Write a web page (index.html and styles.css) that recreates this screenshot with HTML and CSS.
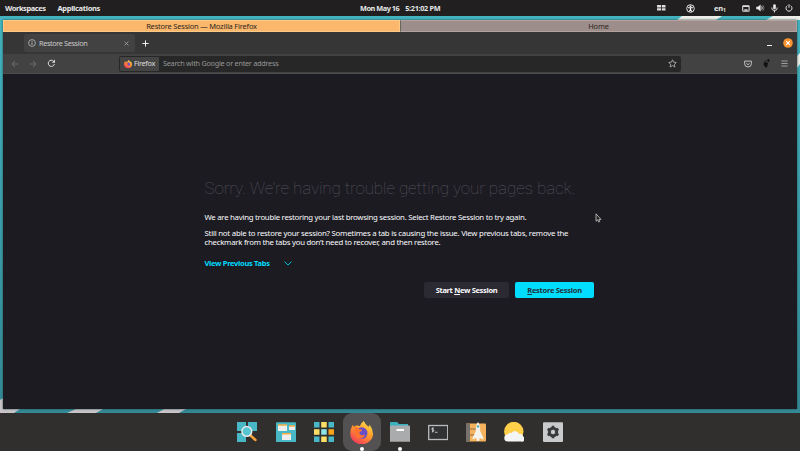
FILE: index.html
```
<!DOCTYPE html>
<html lang="en">
<head>
<meta charset="utf-8">
<title>Restore Session</title>
<link rel="stylesheet" href="styles.css">
</head>
<body>
<header class="panel">
  <span class="t-ws">Workspaces</span><div><span class="t-app">Applications</span></div>
  <div class="clock"><span class="t-date">Mon May 16</span><span class="t-time">5:21:02 PM</span></div>
  <div class="tray">
    <svg class="i-tile" width="9" height="6" viewBox="0 0 9 6"><path fill="#ddd" d="M0 0h4v2.5H0zM0 3.3h4v2.2H0zM4.8 0H8.5v2.5H4.8zM4.8 3.3h3.7v2.2H4.8z"/></svg>
    <svg class="i-acc" width="9" height="9" viewBox="0 0 9 9"><circle cx="4.5" cy="4.5" r="3.8" fill="none" stroke="#e5e5e5"/><circle cx="4.5" cy="2.3" r=".9" fill="#fff"/><path d="M2 3.8h5M4.5 3.5v2L3.3 7.6M4.5 5.5l1.2 2.1" stroke="#fff" stroke-width="1.1" fill="none"/></svg>
    <span class="t-en">en<sub>1</sub></span>
    <svg class="i-net" width="8" height="7" viewBox="0 0 8 7"><rect x=".7" y=".7" width="6.4" height="5.5" rx=".7" fill="none" stroke="#ddd" stroke-width="1.1"/><path d="M1 1.4h6M2.3 5h3.3" stroke="#ddd" stroke-width="1.3"/></svg>
    <svg class="i-vol" width="9" height="8" viewBox="0 0 9 8"><path fill="#eee" d="M.3 2.7H2L4.6.6v6.8L2 5.3H.3z"/><path d="M5.6 2.4q1.3 1.6 0 3.2" stroke="#ddd" fill="none"/><path d="M6.8 1q2.3 3 0 6" stroke="#777" fill="none"/></svg>
    <svg class="i-mic" width="7" height="9" viewBox="0 0 7 9"><rect x="2.2" y=".3" width="2.6" height="5" rx="1.3" fill="#eee"/><path d="M.8 3.5v.6q0 2.4 2.7 2.4t2.7-2.4v-.6M3.5 6.5v2" fill="none" stroke="#ddd"/></svg>
    <svg class="i-pow" width="8" height="8" viewBox="0 0 8 8"><path d="M2.3 1.7a3 3 0 1 0 3.4 0M4 .3v3.4" fill="none" stroke="#e5e5e5"/></svg>
  </div>
</header>
<main class="desktop">
  <svg class="wallpaper" width="800" height="397" viewBox="0 0 800 397"><path fill="#eeeee8" d="M682 0h40l-6 4h-39zM773 0h27v4h-34zM797 40l3-3v11l-3 4z"/><path fill="#c9c4c8" d="M0 384l3-2v11h17l-6 4H0zM76 393h27l-7 4H67zM164 393h22l-7 4h-22z"/></svg>
  <section class="window">
    <div class="stack"><div class="stack-tab active"><span class="t-stack">Restore Session — Mozilla Firefox</span></div><div class="stack-tab"><span class="t-home">Home</span></div></div>
    <div class="tabs">
      <div class="tab">
        <svg width="8" height="8" viewBox="0 0 8 8"><circle cx="4" cy="4" r="3.4" fill="none" stroke="#bbb" stroke-width=".8"/><path d="M4 3.5v2.4M4 1.9v.9" stroke="#ccc" stroke-width=".9"/></svg>
        <span class="t-tab">Restore Session</span>
        <svg class="close" width="5" height="5" viewBox="0 0 5 5"><path d="M.6.6l3.8 3.8M4.4.6L.6 4.4" stroke="#aaa" stroke-width=".8"/></svg>
      </div>
      <svg class="plus" width="7" height="7" viewBox="0 0 7 7"><path d="M3.5.4v6.2M.4 3.5h6.2" stroke="#eee"/></svg>
      <i class="minimize"></i>
      <svg class="win-close" width="10" height="10" viewBox="0 0 10 10"><circle cx="5" cy="5" r="4.8" fill="#f79330"/><path d="M3.2 3.2l3.6 3.6M6.8 3.2L3.2 6.8" stroke="#fff" stroke-width="1.1"/></svg>
    </div>
    <div class="toolbar">
      <svg class="nav" width="8" height="8" viewBox="0 0 8 8"><path d="M7.5 4H1M4 1L1 4l3 3" fill="none" stroke="#777" stroke-width=".8"/></svg>
      <svg class="nav fwd" width="8" height="8" viewBox="0 0 8 8"><path d="M.5 4H7M4 1l3 3-3 3" fill="none" stroke="#777" stroke-width=".8"/></svg>
      <svg class="nav reload" width="9" height="9" viewBox="0 0 9 9"><path d="M7.4 5A3.1 3.1 0 1 1 6.6 2.2" fill="none" stroke="#ddd"/><path d="M8 .6v3.2H4.8z" fill="#ddd"/></svg>
      <div class="url">
        <div class="identity"><svg width="8" height="8" viewBox="0 0 20 20"><use href="#fox"/></svg><span class="t-fx">Firefox</span></div>
        <span class="t-search">Search with Google or enter address</span>
        <svg class="star" width="9" height="9" viewBox="0 0 9 9"><path d="M4.5.8l1.1 2.4 2.7.3-2 1.8.6 2.7-2.4-1.4L2.1 8l.6-2.7-2-1.8 2.7-.3z" fill="none" stroke="#bbb" stroke-width=".8"/></svg>
      </div>
      <svg class="pocket" width="8" height="8" viewBox="0 0 8 8"><path d="M.6 1.1h6.8v2.5a3.4 3.4 0 0 1-6.8 0zM2.3 3.2L4 4.8l1.7-1.6" fill="none" stroke="#ccc" stroke-width=".9"/></svg>
      <svg class="foot" width="7" height="9" viewBox="0 0 7 9"><path d="M1 3.7Q3 2.3 4.5 3.8T3.8 6q1.4.5.3 2T1.3 7Q0 4.8 1 3.7z" fill="#121212"/><ellipse cx="5.4" cy="1.6" rx="1.1" ry="1.5" fill="#121212"/><path d="M1 2.7h.8M2.6 1.7h.8" stroke="#121212"/></svg>
      <svg class="menu" width="7" height="7" viewBox="0 0 7 7"><path d="M.4 1h6.2M.4 3.5h6.2M.4 6h6.2" stroke="#aaa" stroke-width=".9"/></svg>
    </div>
    <article class="page">
      <h1><span class="t-h">Sorry. We’re having trouble getting your pages back.</span></h1>
      <p class="intro"><span class="t-l1">We are having trouble restoring your last browsing session. Select Restore Session to try again.</span></p>
      <p class="detail"><span class="t-l2">Still not able to restore your session? Sometimes a tab is causing the issue. View previous tabs, remove the</span><br><span class="t-l3">checkmark from the tabs you don’t need to recover, and then restore.</span></p>
      <div class="previous"><span class="t-prev">View Previous Tabs</span><svg width="8" height="5" viewBox="0 0 8 5"><path d="M.5.6L4 4.1 7.5.6" fill="none" stroke="#00ddff" stroke-width=".9"/></svg></div>
      <div class="buttons"><button><span class="t-new">Start <u>N</u>ew Session</span></button><button class="primary"><span class="t-res"><u>R</u>estore Session</span></button></div>
    </article>
  </section>
  <svg class="cursor" width="7" height="10" viewBox="0 0 7 10"><path d="M1 .8v7.4l1.6-1.4 1.1 2.3 1.1-.6-1-2.1H6z" fill="#222" stroke="#ccc" stroke-width=".8"/></svg>
</main>
<footer class="dock">
  <div class="app"><svg viewBox="0 0 20 20"><path fill="#49b8c6" d="M0 0h9v9H0zM11 0h9v9h-9zM0 11h9v9H0z"/><path d="M13 13l5.5 5" stroke="#f9a33a" stroke-width="2.4" stroke-linecap="round"/><circle cx="9.8" cy="9.4" r="4.9" fill="#56c5d2" stroke="#e8e8e8" stroke-width="1.5"/></svg></div>
  <div class="app"><svg viewBox="0 0 20 20"><rect width="20" height="20" y=".3" rx="1" fill="#49b8c6"/><path fill="#eee" d="M2 3h9v6H2zM13 4h6v4h-6zM6 12h9v6H6z"/><path stroke="#f5ae42" stroke-width="1.4" d="M2 3h9M13 4h6M6 11.7h9"/></svg></div>
  <div class="app"><svg viewBox="0 0 20 20"><path fill="#49b8c6" d="M0 0h5.5v5.5H0zM14.5 0H20v5.5h-5.5zM0 14.5h5.5V20H0zM14.5 14.5H20V20h-5.5z"/><path fill="#ffe066" d="M7.2 0h5.5v5.5H7.2zM0 7.2h5.5v5.5H0zM7.2 14.5h5.5V20H7.2z"/><path fill="#faa41a" d="M14.5 7.2H20v5.5h-5.5z"/><path fill="#8ee5e8" d="M7.2 7.2h5.5v5.5H7.2z"/></svg></div>
  <div class="app focused"><svg class="fx" viewBox="0 0 20 20"><defs><linearGradient id="flame" x1=".8" y1="0" x2=".2" y2="1"><stop offset="0" stop-color="#ffe14d"/><stop offset=".45" stop-color="#ff9a2c"/><stop offset="1" stop-color="#f5315e"/></linearGradient></defs><g id="fox"><path fill="url(#flame)" d="M12 0q1 2.5 4 5 1-.5 1-2 3 4 3 8.3A9.5 8.8 0 0 1 .3 11Q0 7 2.4 3.2L3.3 5l1.5-.8Q7 3.7 8.5 4.6 9.5 1.5 12 0z"/><circle cx="10.2" cy="10.5" r="5" fill="#6750c7"/><path d="M4 5.2q3-.2 4.3 2l2.4.5q-.4 1.5-2.4 1.9-.4 2.6 2.2 2.8 1.5-.1 2.5-.8-.6 3.2-4.1 3.7Q5 15.3 4.6 11 3.8 8 4 5.2z" fill="#ff722f"/></g></svg><i class="dot"></i></div>
  <div class="app"><svg viewBox="0 0 20 20"><path fill="#3ab2c2" d="M0 1.2Q0 0 1 0h6l2 2h9v4H0z"/><rect y="3.5" width="20" height="16.5" rx="1" fill="#a9abad"/><rect x="6.5" y="7" width="7.5" height="2" rx=".5" fill="#fff"/><path d="M0 19.5h20" stroke="#888"/></svg><i class="dot"></i></div>
  <div class="app"><svg viewBox="0 0 20 20"><rect x=".7" y="3.5" width="19" height="14" fill="#303234" stroke="#b9bbbd" stroke-width="1.3"/><path d="M5.8 6.3Q3.6 5.8 3.7 7t2 1.2-1.8 1.5M4.8 5.5v5M7 10.3h2.5" fill="none" stroke="#ddd" stroke-width=".8"/></svg></div>
  <div class="app"><svg viewBox="0 0 20 20"><rect y="1.5" width="20" height="18" rx="1" fill="#f4b35c"/><path d="M0 1.5h4v18H0z" fill="#78716b"/><path d="M4 7h6M4 13l6 0" stroke="#8d6a52"/><path fill="#f6f3ec" d="M12 0q2.4 3 2.2 9l3.2 7v1.6l-3.6-1.6-.8 3h-2l-.8-3-3.6 1.6V16l3.2-7Q9.6 3 12 0z"/><circle cx="12" cy="4.5" r="1.2" fill="#4ca8b5"/></svg></div>
  <div class="app"><svg viewBox="0 0 20 20"><circle cx="9.8" cy="9.5" r="9.7" fill="#ffcf4a"/><path d="M4 19.5a3.5 3.5 0 0 1-.4-7 3.3 3.3 0 0 1 4-1.5 4.2 4.2 0 0 1 7.5 1 3 3 0 0 1 4 2.5 2.7 2.7 0 0 1-2 5z" fill="#f4f5f6"/></svg></div>
  <div class="app"><svg viewBox="0 0 20 20"><rect y=".3" width="20" height="19.7" rx="1" fill="#c9cacb"/><circle cx="10" cy="10" r="3.7" fill="none" stroke="#393b3c" stroke-width="3"/><path d="M10 3.8v2M10 14.2v2M4.6 6.9l1.7 1M13.7 12.1l1.7 1M4.6 13.1l1.7-1M13.7 7.9l1.7-1" stroke="#393b3c" stroke-width="2.6"/></svg></div>
</footer>
</body>
</html>
```
FILE: styles.css
```
* { box-sizing: border-box; }
body { margin: 0; width: 800px; height: 451px; overflow: hidden; display: flex; flex-direction: column; background: #312f2e; font: 7.5px/9px "Noto Sans", sans-serif; color: #fbfbfe; }
span { white-space: nowrap; }
svg, i { display: block; flex: none; }
.panel { height: 16px; display: grid; grid-template-columns: 52.5px 302.5px 1fr auto; align-items: center; padding: 0 7px 0 5px; background: #211f20; font-weight: 700; color: #e8e8e8; }
.t-ws { letter-spacing: -.42px; }
.t-app { letter-spacing: -.32px; }
.clock { display: flex; gap: 6px; font-size: 7.3px; }
.t-date { letter-spacing: -.45px; }
.t-time { letter-spacing: -.33px; }
.tray { display: flex; align-items: center; }
.t-en { margin-left: 19px; width: 10px; letter-spacing: -.2px; }
.t-en sub { font-size: 5px; line-height: 0; vertical-align: -1px; }
.i-acc { margin-left: 20px; }
.i-net { margin-left: 18px; }
.i-vol { margin-left: 6px; }
.i-mic { margin-left: 6px; }
.i-pow { margin-left: 7px; }
.desktop { height: 397px; position: relative; padding: 4px 3px; background: linear-gradient(#43b4bf, #338995); }
.wallpaper { position: absolute; inset: 0; }
.window { position: relative; height: 389px; display: flex; flex-direction: column; background: #1c1b22; box-shadow: 0 0 2px #244850; }
.stack { height: 12px; display: grid; grid-template-columns: 397px 1fr; color: #30251d; letter-spacing: -.21px; }
.stack-tab { text-align: center; background: #9d8e8b; border: 1px solid #b3a19d; border-left-color: #665; line-height: 10px; }
.stack-tab.active { background: #fbb86c; border-color: #ffc987; }
.tabs { height: 22px; display: flex; align-items: center; padding-left: 21px; background: #363636; }
.tab { width: 111px; height: 18px; display: flex; align-items: center; padding: 0 6px 0 4px; border-radius: 2px; background: #424242; color: #c9c9c9; font-size: 7.3px; }
.t-tab { margin-left: 3px; letter-spacing: -.38px; }
.close { margin-left: auto; }
.plus { margin-left: 7px; }
.minimize { margin: 5px 11px 0 auto; width: 5px; height: 1.5px; background: #eee; }
.win-close { margin-right: 4px; }
.toolbar { height: 20px; display: flex; align-items: center; padding: 0 9px 0 8px; background: #424242; border-bottom: 1px solid #4b4b4b; font-size: 7.3px; }
.fwd { margin-left: 10px; }
.reload { margin-left: 10px; }
.url { margin-left: 63px; width: 562px; height: 16px; display: flex; align-items: center; padding: 1px; background: #272727; border-radius: 2px; }
.identity { height: 14px; width: 39px; display: flex; align-items: center; gap: 2px; padding-left: 4px; background: #444; border-radius: 1px; color: #ddd; }
.t-fx { letter-spacing: -.32px; }
.t-search { margin-left: 4px; color: #969696; letter-spacing: -.27px; }
.star { margin: 0 3px 0 auto; }
.pocket { margin-left: auto; }
.foot { margin-left: 11px; }
.menu { margin-left: 11px; }
.page { flex: 1; padding: 103px 0 0 201.5px; font-size: 7.8px; }
h1 { margin: 0; font: 100 17px/22px Roboto, sans-serif; color: #55545c; letter-spacing: -.1px; }
p { margin: 0; }
.intro { margin-top: 14px; letter-spacing: -.26px; }
.detail { margin-top: 7px; letter-spacing: -.23px; }
.t-l3 { letter-spacing: -.25px; }
.previous { display: flex; align-items: center; gap: 14px; margin-top: 12px; color: #00ddff; font-weight: 700; font-size: 7.5px; letter-spacing: -.3px; }
.buttons { display: flex; gap: 6px; margin: 14px 0 0 219.5px; }
button { width: 85px; height: 16px; padding: 0; border: 0; border-radius: 2px; background: #2b2a33; color: #fbfbfe; font: 700 7.5px/16px "Noto Sans", sans-serif; letter-spacing: -.33px; }
button.primary { width: 79px; background: #00ddff; color: #20303a; letter-spacing: -.28px; }
.cursor { position: absolute; left: 595px; top: 197px; }
.dock { height: 38px; display: flex; justify-content: center; background: #312f2e; }
.app { width: 38.15px; height: 38px; position: relative; display: grid; place-items: center; }
.app svg { width: 20px; height: 20px; }
.app .fx { width: 23px; height: 23px; }
.focused { background: #535151; border-radius: 9px; }
.dot { position: absolute; bottom: 0; left: 17px; width: 4px; height: 4px; border-radius: 50%; background: #fff; }
```
